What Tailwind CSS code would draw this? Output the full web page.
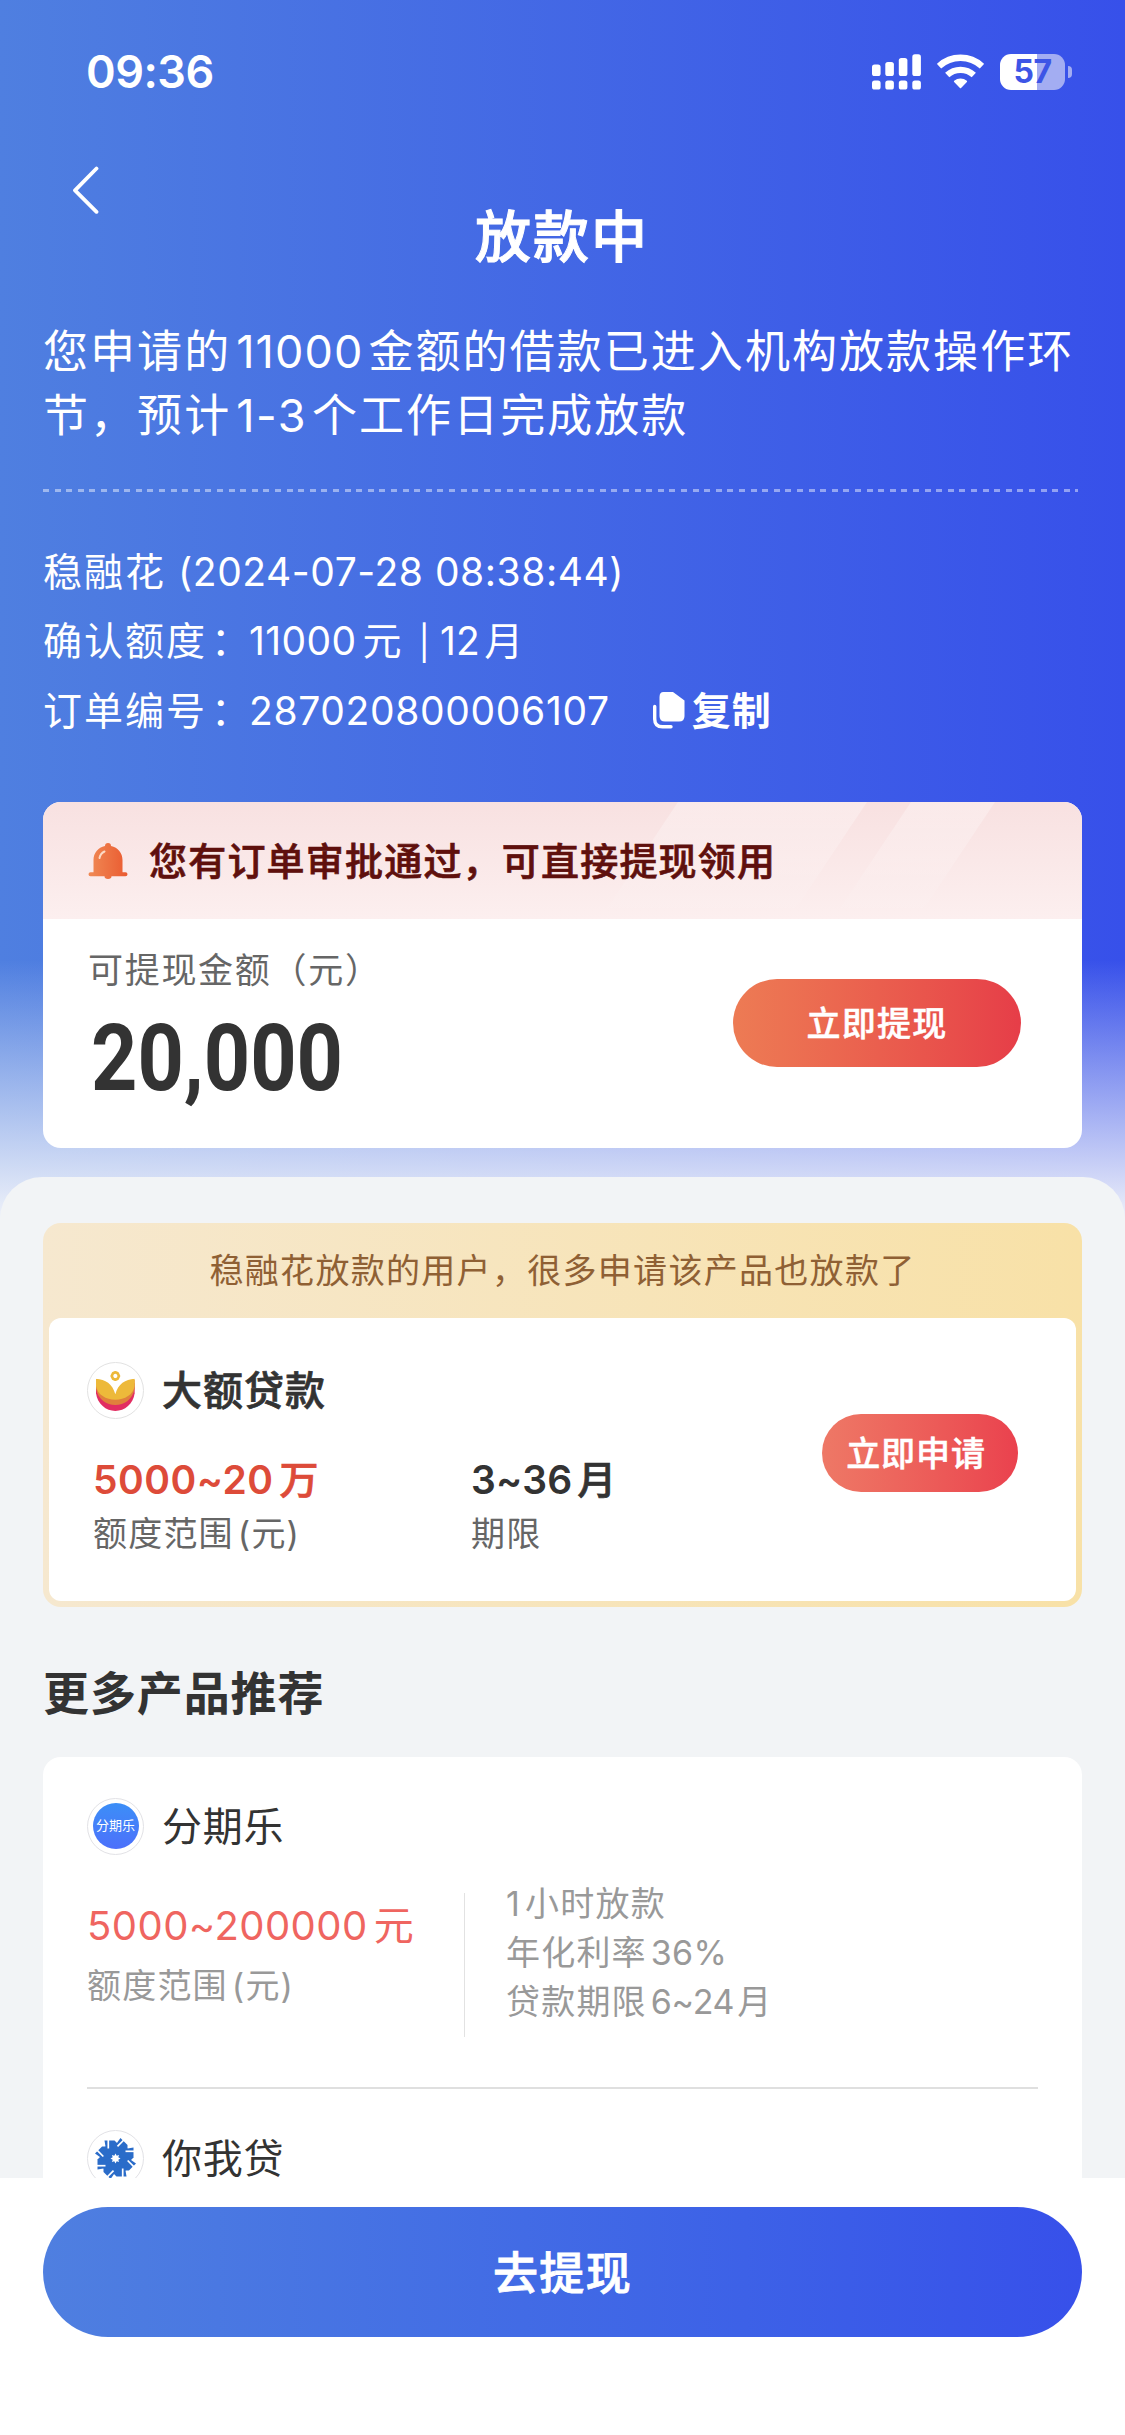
<!DOCTYPE html>
<html lang="zh-CN">
<head>
<meta charset="utf-8">
<title>放款中</title>
<script src="https://cdn.jsdelivr.net/npm/@tailwindcss/browser@4"></script>
</head>
<body class="relative h-[2435px] w-[1125px] overflow-hidden bg-[#f2f4f6] font-[Inter,'Noto_Sans_CJK_SC',sans-serif] text-[#333]">

<!-- header -->
<header class="h-[1240px] bg-[linear-gradient(180deg,rgba(242,244,250,0)_960px,rgba(242,244,250,1)_1225px),linear-gradient(90deg,#4f7fe0,#3750ea)] px-[43px] text-white">
  <div class="flex h-[143px] items-center justify-between pl-[43px] pr-[10px]">
    <span class="text-[45px] font-semibold leading-none tracking-[-0.5px]">09:36</span>
    <div class="flex items-center gap-4">
      <svg class="h-9 w-[49px]" viewBox="0 0 49 36" fill="currentColor">
        <rect x="0" y="10.5" width="8.6" height="11.5" rx="2.6"/><rect x="13.3" y="8" width="8.6" height="14" rx="2.6"/><rect x="26.8" y="4" width="8.6" height="18" rx="2.6"/><rect x="40.3" y="0.3" width="8.6" height="21.7" rx="2.6"/>
        <rect x="0" y="26.5" width="8.6" height="9" rx="2.6"/><rect x="13.3" y="26.5" width="8.6" height="9" rx="2.6"/><rect x="26.8" y="26.5" width="8.6" height="9" rx="2.6"/><rect x="40.3" y="26.5" width="8.6" height="9" rx="2.6"/>
      </svg>
      <svg class="h-9 w-[47px]" viewBox="0 0 47 36" fill="none" stroke="currentColor">
        <path d="M2 12.2a31.6 31.6 0 0 1 43 0" stroke-width="6.4"/>
        <path d="M10.2 21a19.6 19.6 0 0 1 26.6 0" stroke-width="6.2"/>
        <path d="M23.5 33.5l-5.8-6.1a8.8 8.8 0 0 1 11.6 0z" fill="currentColor" stroke-width="1.6" stroke-linejoin="round"/>
      </svg>
      <div class="flex items-center gap-[3px]">
        <div class="flex h-9 w-[65px] items-center justify-center rounded-[11px] bg-[linear-gradient(90deg,#fff_57%,#a3adf2_57%)] text-[32px] font-bold leading-none tracking-[-0.5px] text-[#3d55e6]">57</div>
        <div class="h-3 w-1 rounded-r-full bg-[#a3adf2]"></div>
      </div>
    </div>
  </div>
  <nav class="flex h-[177px] items-start pl-[29px] pt-[23px]">
    <svg class="h-12 w-7" viewBox="0 0 28 48" fill="none" stroke="currentColor" stroke-width="3.8" stroke-linecap="round" stroke-linejoin="round"><path d="M24.500 2.500L3 24.300l21.500 21.500"/></svg>
    <h1 class="ml-[375px] mt-[35px] text-[56px] font-medium leading-[72px] tracking-[2px] [-webkit-text-stroke:1px_currentColor]">放款中</h1>
  </nav>
  <p class="h-[169px] whitespace-nowrap text-[45px] leading-[64px] tracking-[2.050px]">您申请的<span class="mx-[5px] tracking-[1.100px]">11000</span>金额的借款已进入机构放款操作环<br>节，预计<span class="mx-[5px] tracking-[1.500px]">1-3</span>个工作日完成放款</p>
  <div class="mr-[4px] h-[3px] bg-[repeating-linear-gradient(90deg,rgba(255,255,255,.45)_0_6px,transparent_6px_11.6px)]"></div>
  <div class="mt-[44.500px] whitespace-nowrap text-[39px] leading-[69.500px] tracking-[2px]">
    <div>稳融花<span class="ml-3 tracking-[0.550px]">(2024-07-28 08:38:44)</span></div>
    <div>确认额度<span class="relative left-1">：</span><span class="ml-px mr-[6px] tracking-[0.400px]">11000</span>元<span class="ml-[15px] mr-[8px] inline-block text-[34px] leading-none">|</span><span class="mr-1 tracking-[0.300px]">12</span>月</div>
    <div class="flex items-center">订单编号<span class="relative left-1">：</span><span class="ml-px tracking-[0.650px]">287020800006107</span>
      <svg class="ml-[43px] h-[37px] w-8" viewBox="0 0 32 37"><path d="M10.500 0h9.500l11.500 8.500V24q0 5.500-5.500 5.500H12q-5.500 0-5.500-5.500V5q0-5 4-5z" fill="#fff"/><path d="M1.700 14.500v12.500q0 7.800 7.800 7.800h8.500" fill="none" stroke="#fff" stroke-width="3.4" stroke-linecap="round"/></svg>
      <span class="ml-[7px] font-bold tracking-[1px]">复制</span>
    </div>
  </div>

  <!-- withdrawable balance -->
  <section class="mt-[57px] h-[346px] overflow-hidden rounded-[18px] bg-white">
    <div class="relative flex h-[117px] items-center bg-linear-to-b from-[#f8e1e1] to-[#fcefef] pl-[45px]">
      <svg class="absolute right-0 top-0 h-[117px] w-[480px]" viewBox="0 0 480 117"><defs><linearGradient id="sh" x2="0" y2="1"><stop stop-color="#fff" stop-opacity=".32"/><stop offset="1" stop-color="#fff" stop-opacity="0"/></linearGradient></defs><path d="M76 0h189l-78 117H-2zM309 0h84l-78 117h-84z" fill="url(#sh)"/></svg>
      <svg class="relative h-9 w-10" viewBox="0 0 40 36"><defs><linearGradient id="bell"><stop stop-color="#f08a55"/><stop offset="1" stop-color="#ea5a30"/></linearGradient></defs><path d="M17 3a3 3 0 0 1 6 0c7 1.500 11.500 7 11.500 14v12.300H37.500a2 2 0 0 1 0 4H23.500a3.500 2.700 0 0 1-7 0H2.500a2 2 0 0 1 0-4H5.500V17C5.500 10 10 4.500 17 3z" fill="url(#bell)"/><path d="M11.500 15q.8-4.500 5-6.500" stroke="#fcd9c4" stroke-width="2" stroke-linecap="round" fill="none"/></svg>
      <span class="relative ml-[21px] whitespace-nowrap pt-[2px] text-[38px] font-medium tracking-[1.200px] text-[#5f100d] [-webkit-text-stroke:0.7px_currentColor]">您有订单审批通过，可直接提现领用</span>
    </div>
    <div class="flex h-[229px] items-start justify-between pl-[45px] pr-[61px]">
      <div class="pt-[25px]">
        <div class="text-[35px] leading-[52px] tracking-[1.700px] text-[#666]">可提现金额（元）</div>
        <div class="ml-[3px] mt-[15px] origin-left scale-x-[.87] font-[Roboto] text-[93px] font-bold leading-[96px] text-[#333]">20,000</div>
      </div>
      <button class="mt-[60px] h-[88px] w-[288px] rounded-full bg-linear-to-r from-[#ed7b54] to-[#e63d48] pt-px text-[34px] font-medium tracking-[1.200px] [-webkit-text-stroke:0.5px_currentColor]">立即提现</button>
    </div>
  </section>
</header>

<!-- sheet -->
<main class="relative -mt-[63px] h-[1001px] overflow-hidden rounded-t-[42px] bg-[#f2f4f6] px-[43px] pt-[46px]">
  <section class="h-[384px] rounded-[18px] bg-linear-to-r from-[#f6e8cf] to-[#f8e1a7] px-[6px]">
    <div class="flex h-[95px] items-center justify-center text-[34px] tracking-[1.300px] text-[#8f6034]">稳融花放款的用户，很多申请该产品也放款了</div>
    <div class="flex h-[283px] items-start justify-between rounded-[12px] bg-white pl-[38px] pr-[58px]">
      <div class="pt-11">
        <div class="flex items-center">
          <svg class="h-[57px] w-[57px]" viewBox="51 66 171 171"><circle cx="136.500" cy="151.500" r="84" fill="#fff" stroke="#e2e2e2" stroke-width="3"/><path d="M78 130V160C82 192 108 213 136 213S190 192 194 160V130z" fill="#e22d62"/><path d="M78 120V146C84 178 110 195 136 195S188 178 194 146V120z" fill="#e0803c"/><path d="M78 116H194V138C190 164 164 179 136 179S82 164 78 138z" fill="#edb93a"/><path d="M78 112V116C106 119 128 130 136 163C144 130 166 119 194 116V112z" fill="#fff"/><path d="M136 97l7 3 4 8-4 8-7 3-7-3-4-8 4-8z" fill="#fff" stroke="#edb93a" stroke-width="8" stroke-linejoin="round"/></svg>
          <span class="ml-[18px] text-[40px] font-medium leading-[57px] tracking-[1px] [-webkit-text-stroke:0.7px_currentColor]">大额贷款</span>
        </div>
        <div class="flex pl-[6px] pt-[35px]">
          <div class="w-[378px]">
            <div class="text-[39px] font-medium leading-[52px] text-[#dd4b39]"><span class="mr-[6px] font-semibold tracking-[0.500px]">5000~20</span><span class="[-webkit-text-stroke:0.7px_currentColor]">万</span></div>
            <div class="text-[34px] leading-[56px] tracking-[1.200px] text-[#666]">额度范围<span class="ml-1">(</span>元)</div>
          </div>
          <div>
            <div class="text-[39px] font-medium leading-[52px]"><span class="mr-[5px] font-semibold tracking-[0.200px]">3~36</span><span class="[-webkit-text-stroke:0.7px_currentColor]">月</span></div>
            <div class="text-[34px] leading-[56px] tracking-[1.200px] text-[#666]">期限</div>
          </div>
        </div>
      </div>
      <button class="mt-[96px] h-[78px] w-[196px] rounded-full bg-linear-to-r from-[#ee7866] to-[#ea414e] pr-[8px] text-[34px] font-medium tracking-[0.900px] text-white [-webkit-text-stroke:0.5px_currentColor]">立即申请</button>
    </div>
  </section>

  <h2 class="mt-[54px] text-[46px] font-bold leading-[64px] tracking-[0.900px]">更多产品推荐</h2>

  <section class="mt-8 h-[500px] rounded-t-[18px] bg-white px-[44px] pt-10">
    <div class="flex items-center">
      <div class="flex h-[57px] w-[57px] items-center justify-center rounded-full border border-[#e2e2e6]">
        <div class="flex h-[46px] w-[46px] items-center justify-center rounded-full bg-linear-to-b from-[#3b8ef7] to-[#4c70fb] text-[13px] text-white">分期乐</div>
      </div>
      <span class="ml-[18px] pt-px text-[40px] leading-[57px] tracking-[0.800px]">分期乐</span>
    </div>
    <div class="flex pt-[24px]">
      <div class="w-[377px] pt-[18px]">
        <div class="text-[40px] leading-[58px] text-[#ef6560]"><span class="mr-[6px] tracking-[0.450px]">5000~200000</span>元</div>
        <div class="pt-px text-[34px] leading-[60px] tracking-[1.200px] text-[#999]">额度范围<span class="ml-1">(</span>元)</div>
      </div>
      <div class="mt-[14px] h-[144px] w-px bg-[#e2e2e2]"></div>
      <div class="ml-[41px] text-[34px] leading-[49px] tracking-[1.200px] text-[#999]">
        <div><span class="mr-1">1</span>小时放款</div>
        <div>年化利率<span class="ml-1 tracking-[0.300px]">36%</span></div>
        <div>贷款期限<span class="ml-1 mr-[3px] tracking-[-0.300px]">6~24</span>月</div>
      </div>
    </div>
    <div class="mt-[50px] h-[2px] bg-[#dfdfdf]"></div>
    <div class="flex items-center pt-10">
      <svg class="h-[57px] w-[57px]" viewBox="-28.500 -28.500 57 57"><defs><path id="bl" d="M-11-18H-1L6-11 1-4-9-6z"/><path id="sl" d="M-7.200-20V-10"/></defs><circle r="28" fill="#fff" stroke="#e2e2e6"/>
        <g fill="#2a6cc9"><circle r="15.500"/><use href="#bl"/><use href="#bl" transform="rotate(45)"/><use href="#bl" transform="rotate(90)"/><use href="#bl" transform="rotate(135)"/><use href="#bl" transform="rotate(180)"/><use href="#bl" transform="rotate(225)"/><use href="#bl" transform="rotate(270)"/><use href="#bl" transform="rotate(315)"/></g>
        <g stroke="#fff" stroke-width="1.700"><use href="#sl"/><use href="#sl" transform="rotate(45)"/><use href="#sl" transform="rotate(90)"/><use href="#sl" transform="rotate(135)"/><use href="#sl" transform="rotate(180)"/><use href="#sl" transform="rotate(225)"/><use href="#sl" transform="rotate(270)"/><use href="#sl" transform="rotate(315)"/></g>
        <path d="M0-5l1.200 2.200 2.400-.8-.8 2.400L5 0 2.800 1.200l.8 2.400-2.400-.8L0 5l-1.200-2.200-2.400.8.800-2.400L-5 0l2.200-1.200-.8-2.400 2.400.8z" fill="#fff"/></svg>
      <span class="ml-[18px] pt-px text-[40px] leading-[57px] tracking-[0.800px]">你我贷</span>
    </div>
  </section>
</main>

<footer class="relative h-[257px] bg-white px-[43px] pt-[29px]">
  <button class="h-[130px] w-full rounded-full bg-linear-to-r from-[#4f7fe0] to-[#3750ea] pt-[3px] text-[45px] font-medium tracking-[1.400px] text-white [-webkit-text-stroke:0.8px_currentColor]">去提现</button>
</footer>
</body>
</html>
